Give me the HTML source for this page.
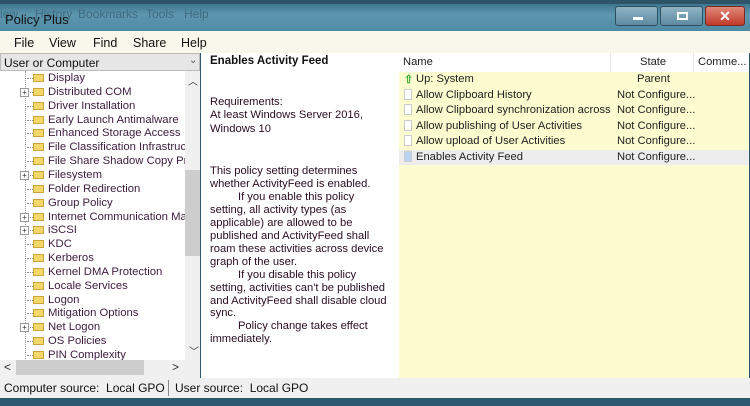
<!DOCTYPE html>
<html><head><meta charset="utf-8"><style>
*{margin:0;padding:0;box-sizing:border-box}
body{width:750px;height:406px;overflow:hidden;background:#2c5870;font-family:"Liberation Sans",sans-serif;font-size:11px;position:relative}
.title{position:absolute;left:0;top:0;width:750px;height:31px;background:linear-gradient(#3f7690,#5d97ae 40%,#4f8aa4);border-top:4px solid #2e5468}
.title .t{position:absolute;left:5px;top:8px;font-size:13px;color:#111}
.ghost{position:absolute;top:3px;font-size:12px;color:#3f6a80}
.btn{position:absolute;top:2px;height:20px;border:1px solid #2d4f62;border-radius:3px;background:linear-gradient(#8fb3c4,#5d8ba1)}
.menu{position:absolute;left:0;top:31px;width:750px;height:22px;background:#f7f7ec}
.menu span{position:absolute;top:5px;font-size:12.5px;color:#111}
.left{position:absolute;left:0;top:53px;width:200px;height:325px;background:#fff;border-right:1px solid #ddd}
.combo{position:absolute;left:0;top:0;width:200px;height:18px;background:#e6e6e6;border:1px solid #bbb}
.combo span{position:absolute;left:3px;top:2px;font-size:12px;color:#111}
.item{position:absolute;left:48px;font-size:11.3px;color:#3d1c3d;white-space:nowrap;width:137px;overflow:hidden}
.fold{position:absolute;left:33px;width:11px;height:8px;background:#f4d76a;border:1px solid #c9a53a}
.hd{position:absolute;left:27px;width:6px;border-top:1px dotted #888}
.plus{position:absolute;left:20px;width:9px;height:9px;border:1px solid #999;background:#fff;font-size:8px;line-height:7px;text-align:center;color:#333}
.mid{position:absolute;left:201px;top:53px;width:198px;height:325px;background:#fff;color:#2a0d20;font-size:11.2px;line-height:13.4px}
.right{position:absolute;left:399px;top:53px;width:350px;height:325px;background:#fcfcd0}
.row{position:absolute;left:0;width:350px;height:15px;font-size:11.2px;color:#222}
.status{position:absolute;left:0;top:378px;width:750px;height:20px;background:#f0f0f0;font-size:12px;color:#111}
</style></head><body>
<div class="title">
<span class="ghost" style="left:0">iew</span><span class="ghost" style="left:35px">History</span><span class="ghost" style="left:78px">Bookmarks</span><span class="ghost" style="left:146px">Tools</span><span class="ghost" style="left:184px">Help</span>
<div class="t">Policy Plus</div>
<div class="btn" style="left:615px;width:43px"><div style="position:absolute;left:17px;top:10px;width:10px;height:3px;background:#fff"></div></div>
<div class="btn" style="left:660px;width:43px"><div style="position:absolute;left:16px;top:5px;width:11px;height:8px;border:2px solid #fff"></div></div>
<div class="btn" style="left:705px;width:40px;background:linear-gradient(#e08a7a,#c0392b);border-color:#7a2a20"><div style="position:absolute;left:0;width:38px;top:1px;text-align:center;color:#fff;font-weight:bold;font-size:14px">✕</div></div>
</div>
<div class="menu"><span style="left:14px">File</span><span style="left:49px">View</span><span style="left:93px">Find</span><span style="left:133px">Share</span><span style="left:181px">Help</span></div>
<div class="left">
<div style="position:absolute;left:25px;top:18px;height:290px;border-left:1px dotted #999"></div>
<div id="tree"></div>
<div class="combo"><span>User or Computer</span><span style="left:188px;top:1px;font-size:10px;color:#555">⌄</span></div>
<div style="position:absolute;left:185px;top:18px;width:15px;height:289px;background:#f0f0f0"></div>
<div style="position:absolute;left:185px;top:117px;width:15px;height:86px;background:#cdcdcd"></div>
<div style="position:absolute;left:188px;top:20px;font-size:10px;color:#333">︿</div>
<div style="position:absolute;left:189px;top:290px;font-size:10px;color:#333">﹀</div>
<div style="position:absolute;left:0;top:307px;width:200px;height:15px;background:#f0f0f0"></div>
<div style="position:absolute;left:16px;top:307px;width:128px;height:15px;background:#cdcdcd"></div>
<div style="position:absolute;left:4px;top:307px;font-size:12px;color:#333">&lt;</div>
<div style="position:absolute;left:172px;top:307px;font-size:12px;color:#333">&gt;</div>
<div style="position:absolute;left:0;top:322px;width:200px;height:3px;background:#f0f0f0"></div>
</div>
<div class="mid">
<div style="position:absolute;left:9px;top:2px;font-weight:bold;font-size:11.5px;color:#111">Enables Activity Feed</div>
<div style="position:absolute;left:9px;top:43px">Requirements:<br>At least Windows Server 2016,<br>Windows 10</div>
<div style="position:absolute;left:9px;top:112px;width:180px;line-height:12.95px">This policy setting determines whether ActivityFeed is enabled.<br>&nbsp;&nbsp;&nbsp;&nbsp;&nbsp;&nbsp;&nbsp;&nbsp;&nbsp;If you enable this policy setting, all activity types (as applicable) are allowed to be published and ActivityFeed shall roam these activities across device graph of the user.<br>&nbsp;&nbsp;&nbsp;&nbsp;&nbsp;&nbsp;&nbsp;&nbsp;&nbsp;If you disable this policy setting, activities can't be published and ActivityFeed shall disable cloud sync.<br>&nbsp;&nbsp;&nbsp;&nbsp;&nbsp;&nbsp;&nbsp;&nbsp;&nbsp;Policy change takes effect immediately.</div>
</div>
<div class="right">
<div style="position:absolute;left:0;top:0;width:350px;height:19px;background:#fff"></div>
<div style="position:absolute;left:211px;top:0;height:19px;border-left:1px solid #e5e5e5"></div>
<div style="position:absolute;left:294px;top:0;height:19px;border-left:1px solid #e5e5e5"></div>
<div class="row" style="top:3px"><span style="position:absolute;left:4px">Name</span><span style="position:absolute;left:241px">State</span><span style="position:absolute;left:299px">Comme...</span></div>
<div class="row" style="top:20px"><span style="position:absolute;left:5px;color:#3a3;font-weight:bold">⇧</span><span style="position:absolute;left:17px">Up: System</span><span style="position:absolute;left:238px">Parent</span></div>
<div id="rows"></div>
</div>
<div class="status"><span style="position:absolute;left:4px;top:3px">Computer source:&nbsp;&nbsp;Local GPO</span><div style="position:absolute;left:168px;top:2px;height:16px;border-left:1px solid #888"></div><span style="position:absolute;left:175px;top:3px">User source:&nbsp;&nbsp;Local GPO</span></div>
<script>
var items=["Display","Distributed COM","Driver Installation","Early Launch Antimalware","Enhanced Storage Access","File Classification Infrastructure","File Share Shadow Copy Provider","Filesystem","Folder Redirection","Group Policy","Internet Communication Management","iSCSI","KDC","Kerberos","Kernel DMA Protection","Locale Services","Logon","Mitigation Options","Net Logon","OS Policies","PIN Complexity"];
var plus=[1,7,10,11,18];var h="";
items.forEach(function(t,i){var y=19+i*13.85;
h+='<div class="hd" style="top:'+(y+6)+'px"></div><div class="fold" style="top:'+(y+2)+'px"></div><div class="item" style="top:'+y+'px">'+t+'</div>';
if(plus.indexOf(i)>=0)h+='<div class="plus" style="top:'+(y+2)+'px">+</div>';});
document.getElementById("tree").innerHTML=h;
var r=["Allow Clipboard History","Allow Clipboard synchronization across ...","Allow publishing of User Activities","Allow upload of User Activities","Enables Activity Feed"];h="";
r.forEach(function(t,i){var y=35+i*15.4;
h+='<div class="row" style="top:'+y+'px;'+(i==4?'background:#ededed;':'')+'"><div style="position:absolute;left:5px;top:1px;width:8px;height:11px;border:1px solid #ccc;background:'+(i==4?'#b9d4ee':'#fff')+'"></div><span style="position:absolute;left:17px;top:1px;width:196px;overflow:hidden;white-space:nowrap">'+t+'</span><span style="position:absolute;left:218px;top:1px">Not Configure...</span></div>';});
document.getElementById("rows").innerHTML=h;
</script>
</body></html>
